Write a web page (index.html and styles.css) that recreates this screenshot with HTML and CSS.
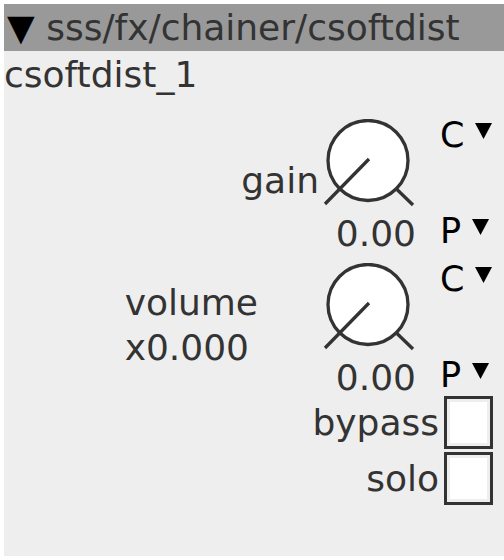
FILE: index.html
```html
<!DOCTYPE html>
<html>
<head>
<meta charset="utf-8">
<link rel="stylesheet" href="styles.css">
</head>
<body>
<div class="panel">
  <div class="header"><span class="tri">▼</span> sss/fx/chainer/csoftdist</div>
  <div class="title">csoftdist_1</div>
  <div class="knobrow first">
    <div class="label gain">gain</div>
    <div class="knobcol">
      <svg class="knob" width="96" height="92" viewBox="0 0 96 92">
        <circle cx="48" cy="41.5" r="40" fill="#fff" stroke="#333" stroke-width="3.3"/>
        <line x1="49" y1="40" x2="5" y2="85" stroke="#333" stroke-width="3.3"/>
        <line x1="77" y1="70.5" x2="93" y2="86" stroke="#333" stroke-width="3.3"/>
      </svg>
      <div class="value">0.00</div>
    </div>
    <div class="side">
      <div class="mode">C<svg class="dd" width="17" height="16" viewBox="0 0 17 16"><polygon points="0,0 17,0 8.5,16" fill="#000"/></svg></div>
      <div class="mode">P<svg class="dd" width="17" height="16" viewBox="0 0 17 16"><polygon points="0,0 17,0 8.5,16" fill="#000"/></svg></div>
    </div>
  </div>
  <div class="knobrow">
    <div class="label multi">volume<br>x0.000</div>
    <div class="knobcol">
      <svg class="knob" width="96" height="92" viewBox="0 0 96 92">
        <circle cx="48" cy="41.5" r="40" fill="#fff" stroke="#333" stroke-width="3.3"/>
        <line x1="49" y1="40" x2="5" y2="85" stroke="#333" stroke-width="3.3"/>
        <line x1="77" y1="70.5" x2="93" y2="86" stroke="#333" stroke-width="3.3"/>
      </svg>
      <div class="value">0.00</div>
    </div>
    <div class="side">
      <div class="mode">C<svg class="dd" width="17" height="16" viewBox="0 0 17 16"><polygon points="0,0 17,0 8.5,16" fill="#000"/></svg></div>
      <div class="mode">P<svg class="dd" width="17" height="16" viewBox="0 0 17 16"><polygon points="0,0 17,0 8.5,16" fill="#000"/></svg></div>
    </div>
  </div>
  <div class="checkrow first"><span class="clabel">bypass</span><span class="box"></span></div>
  <div class="checkrow"><span class="clabel">solo</span><span class="box"></span></div>
</div>
</body>
</html>
```
FILE: styles.css
```css
html, body {
  margin: 0;
  padding: 0;
  background: #fff;
}
body {
  font-family: "DejaVu Sans", sans-serif;
  color: #333;
}
.panel {
  margin: 4px 0 0 4px;
  height: 552px;
  background: #eeeeee;
  overflow: hidden;
}
.header {
  height: 47px;
  background: #999999;
  font-size: 36px;
  line-height: 47px;
  padding-left: 3px;
  white-space: nowrap;
}
.tri {
  color: #000;
  font-size: 36px;
}
.title {
  font-size: 36px;
  line-height: 47px;
  height: 47px;
}
.knobrow {
  display: flex;
  justify-content: flex-end;
  align-items: flex-start;
  height: 144px;
}
.knobrow.first {
  margin-top: 7px;
}
.label {
  font-size: 36px;
  line-height: 40px;
  margin-right: 1px;
  padding-top: 56px;
  white-space: nowrap;
}
.label.multi {
  line-height: 45px;
  padding-top: 31px;
  margin-right: 62px;
}
.knobcol {
  display: flex;
  flex-direction: column;
  align-items: flex-end;
  width: 96px;
  padding-top: 14px;
}
.knob {
  display: block;
}
.value {
  font-size: 36px;
  line-height: 30px;
  margin-top: 8px;
  white-space: nowrap;
}
.side {
  width: 88px;
  height: 144px;
  display: flex;
  flex-direction: column;
  justify-content: space-between;
  padding: 12px 0 0 24px;
  box-sizing: border-box;
}
.mode {
  font-size: 35px;
  line-height: 36px;
  color: #000;
  white-space: nowrap;
}
.dd {
  vertical-align: top;
  margin-top: 6px;
  margin-left: 11px;
}
.checkrow {
  display: flex;
  justify-content: flex-end;
  align-items: center;
  height: 53px;
  margin-top: 3px;
  padding-right: 11px;
}
.clabel {
  font-size: 36px;
  line-height: 40px;
  margin-right: 5px;
}
.box {
  width: 43px;
  height: 47px;
  background: #fff;
  border: 3px solid #333;
  box-shadow: inset 0 0 0 3px #eee;
}
```
